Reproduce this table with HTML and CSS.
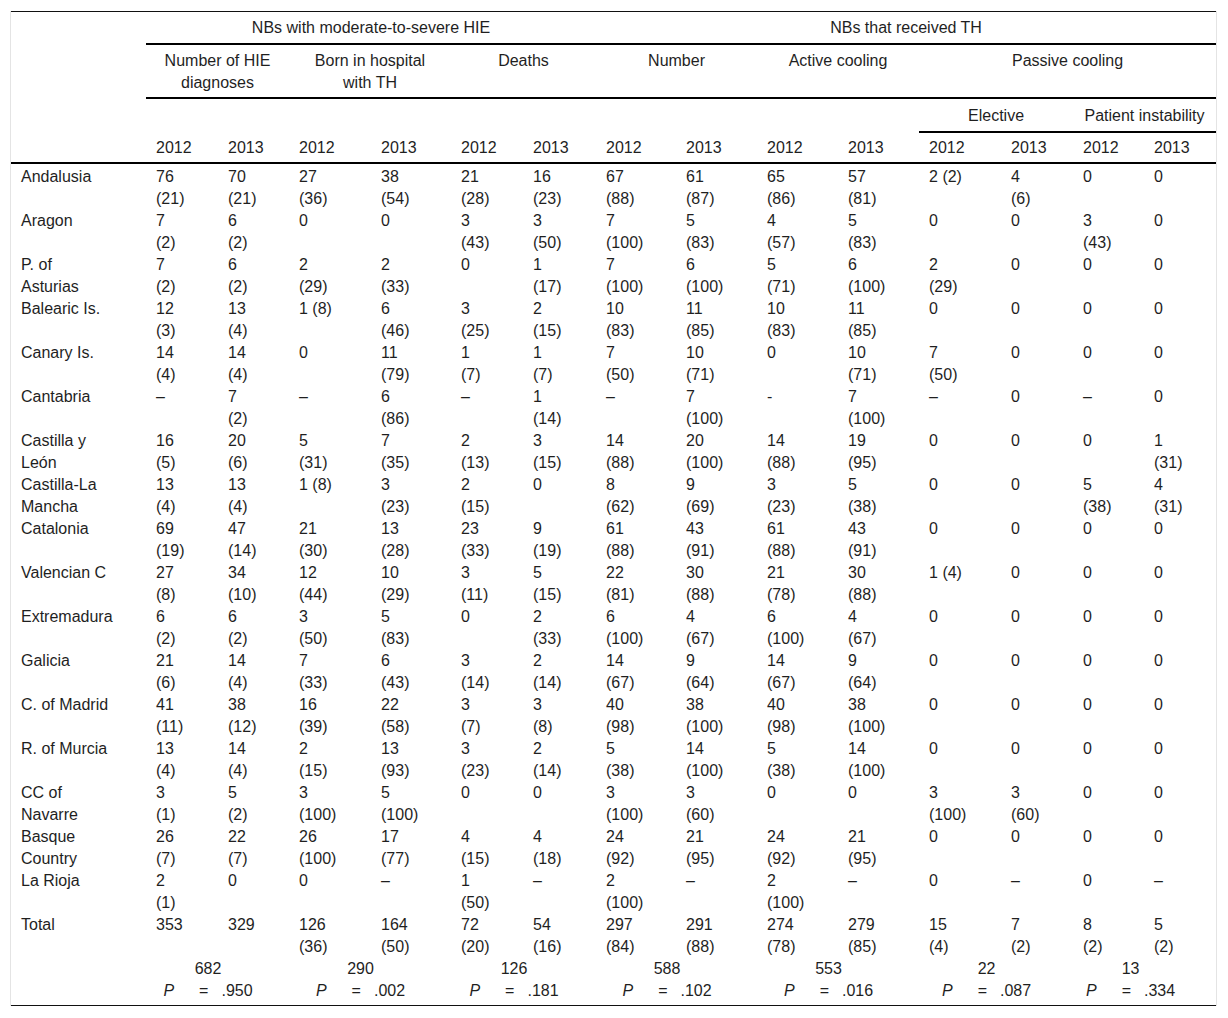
FILE: index.html
```html
<!DOCTYPE html>
<html lang="en">
<head>
<meta charset="utf-8">
<title>HIE and therapeutic hypothermia by region</title>
<link rel="stylesheet" href="styles.css">
</head>
<body>
<div class="wrap">
<table class="data">
<colgroup>
<col class="c-stub"><col class="w72"><col class="w71"><col class="w82"><col class="w80"><col class="w72"><col class="w73"><col class="w80"><col class="w81"><col class="w81"><col class="w81"><col class="w82"><col class="w72"><col class="w71"><col class="w72">
</colgroup>
<thead>
<tr class="r1">
<th class="stub-head" rowspan="4"></th>
<th colspan="6">NBs with moderate-to-severe HIE</th>
<th colspan="8">NBs that received TH</th>
</tr>
<tr class="r2">
<th colspan="2">Number of HIE<br>diagnoses</th>
<th colspan="2">Born in hospital<br>with TH</th>
<th colspan="2">Deaths</th>
<th colspan="2">Number</th>
<th colspan="2">Active cooling</th>
<th colspan="4">Passive cooling</th>
</tr>
<tr class="r3">
<th colspan="10" class="blank"></th>
<th colspan="2" class="sub">Elective</th>
<th colspan="2" class="sub">Patient instability</th>
</tr>
<tr class="r4">
<th>2012</th><th>2013</th><th>2012</th><th>2013</th><th>2012</th><th>2013</th><th>2012</th><th>2013</th><th>2012</th><th>2013</th><th>2012</th><th>2013</th><th>2012</th><th>2013</th>
</tr>
</thead>
<tbody>
<tr class="first"><td>Andalusia</td><td>76<br>(21)</td><td>70<br>(21)</td><td>27<br>(36)</td><td>38<br>(54)</td><td>21<br>(28)</td><td>16<br>(23)</td><td>67<br>(88)</td><td>61<br>(87)</td><td>65<br>(86)</td><td>57<br>(81)</td><td>2 (2)</td><td>4<br>(6)</td><td>0</td><td>0</td></tr>
<tr><td>Aragon</td><td>7<br>(2)</td><td>6<br>(2)</td><td>0</td><td>0</td><td>3<br>(43)</td><td>3<br>(50)</td><td>7<br>(100)</td><td>5<br>(83)</td><td>4<br>(57)</td><td>5<br>(83)</td><td>0</td><td>0</td><td>3<br>(43)</td><td>0</td></tr>
<tr><td>P. of<br>Asturias</td><td>7<br>(2)</td><td>6<br>(2)</td><td>2<br>(29)</td><td>2<br>(33)</td><td>0</td><td>1<br>(17)</td><td>7<br>(100)</td><td>6<br>(100)</td><td>5<br>(71)</td><td>6<br>(100)</td><td>2<br>(29)</td><td>0</td><td>0</td><td>0</td></tr>
<tr><td>Balearic Is.</td><td>12<br>(3)</td><td>13<br>(4)</td><td>1 (8)</td><td>6<br>(46)</td><td>3<br>(25)</td><td>2<br>(15)</td><td>10<br>(83)</td><td>11<br>(85)</td><td>10<br>(83)</td><td>11<br>(85)</td><td>0</td><td>0</td><td>0</td><td>0</td></tr>
<tr><td>Canary Is.</td><td>14<br>(4)</td><td>14<br>(4)</td><td>0</td><td>11<br>(79)</td><td>1<br>(7)</td><td>1<br>(7)</td><td>7<br>(50)</td><td>10<br>(71)</td><td>0</td><td>10<br>(71)</td><td>7<br>(50)</td><td>0</td><td>0</td><td>0</td></tr>
<tr><td>Cantabria</td><td>–</td><td>7<br>(2)</td><td>–</td><td>6<br>(86)</td><td>–</td><td>1<br>(14)</td><td>–</td><td>7<br>(100)</td><td>-</td><td>7<br>(100)</td><td>–</td><td>0</td><td>–</td><td>0</td></tr>
<tr><td>Castilla y<br>León</td><td>16<br>(5)</td><td>20<br>(6)</td><td>5<br>(31)</td><td>7<br>(35)</td><td>2<br>(13)</td><td>3<br>(15)</td><td>14<br>(88)</td><td>20<br>(100)</td><td>14<br>(88)</td><td>19<br>(95)</td><td>0</td><td>0</td><td>0</td><td>1<br>(31)</td></tr>
<tr><td>Castilla-La<br>Mancha</td><td>13<br>(4)</td><td>13<br>(4)</td><td>1 (8)</td><td>3<br>(23)</td><td>2<br>(15)</td><td>0</td><td>8<br>(62)</td><td>9<br>(69)</td><td>3<br>(23)</td><td>5<br>(38)</td><td>0</td><td>0</td><td>5<br>(38)</td><td>4<br>(31)</td></tr>
<tr><td>Catalonia</td><td>69<br>(19)</td><td>47<br>(14)</td><td>21<br>(30)</td><td>13<br>(28)</td><td>23<br>(33)</td><td>9<br>(19)</td><td>61<br>(88)</td><td>43<br>(91)</td><td>61<br>(88)</td><td>43<br>(91)</td><td>0</td><td>0</td><td>0</td><td>0</td></tr>
<tr><td>Valencian C</td><td>27<br>(8)</td><td>34<br>(10)</td><td>12<br>(44)</td><td>10<br>(29)</td><td>3<br>(11)</td><td>5<br>(15)</td><td>22<br>(81)</td><td>30<br>(88)</td><td>21<br>(78)</td><td>30<br>(88)</td><td>1 (4)</td><td>0</td><td>0</td><td>0</td></tr>
<tr><td>Extremadura</td><td>6<br>(2)</td><td>6<br>(2)</td><td>3<br>(50)</td><td>5<br>(83)</td><td>0</td><td>2<br>(33)</td><td>6<br>(100)</td><td>4<br>(67)</td><td>6<br>(100)</td><td>4<br>(67)</td><td>0</td><td>0</td><td>0</td><td>0</td></tr>
<tr><td>Galicia</td><td>21<br>(6)</td><td>14<br>(4)</td><td>7<br>(33)</td><td>6<br>(43)</td><td>3<br>(14)</td><td>2<br>(14)</td><td>14<br>(67)</td><td>9<br>(64)</td><td>14<br>(67)</td><td>9<br>(64)</td><td>0</td><td>0</td><td>0</td><td>0</td></tr>
<tr><td>C. of Madrid</td><td>41<br>(11)</td><td>38<br>(12)</td><td>16<br>(39)</td><td>22<br>(58)</td><td>3<br>(7)</td><td>3<br>(8)</td><td>40<br>(98)</td><td>38<br>(100)</td><td>40<br>(98)</td><td>38<br>(100)</td><td>0</td><td>0</td><td>0</td><td>0</td></tr>
<tr><td>R. of Murcia</td><td>13<br>(4)</td><td>14<br>(4)</td><td>2<br>(15)</td><td>13<br>(93)</td><td>3<br>(23)</td><td>2<br>(14)</td><td>5<br>(38)</td><td>14<br>(100)</td><td>5<br>(38)</td><td>14<br>(100)</td><td>0</td><td>0</td><td>0</td><td>0</td></tr>
<tr><td>CC of<br>Navarre</td><td>3<br>(1)</td><td>5<br>(2)</td><td>3<br>(100)</td><td>5<br>(100)</td><td>0</td><td>0</td><td>3<br>(100)</td><td>3<br>(60)</td><td>0</td><td>0</td><td>3<br>(100)</td><td>3<br>(60)</td><td>0</td><td>0</td></tr>
<tr><td>Basque<br>Country</td><td>26<br>(7)</td><td>22<br>(7)</td><td>26<br>(100)</td><td>17<br>(77)</td><td>4<br>(15)</td><td>4<br>(18)</td><td>24<br>(92)</td><td>21<br>(95)</td><td>24<br>(92)</td><td>21<br>(95)</td><td>0</td><td>0</td><td>0</td><td>0</td></tr>
<tr><td>La Rioja</td><td>2<br>(1)</td><td>0</td><td>0</td><td>–</td><td>1<br>(50)</td><td>–</td><td>2<br>(100)</td><td>–</td><td>2<br>(100)</td><td>–</td><td>0</td><td>–</td><td>0</td><td>–</td></tr>
<tr><td>Total</td><td>353</td><td>329</td><td>126<br>(36)</td><td>164<br>(50)</td><td>72<br>(20)</td><td>54<br>(16)</td><td>297<br>(84)</td><td>291<br>(88)</td><td>274<br>(78)</td><td>279<br>(85)</td><td>15<br>(4)</td><td>7<br>(2)</td><td>8<br>(2)</td><td>5<br>(2)</td></tr>
<tr class="pvals">
<td></td>
<td colspan="2">682<br><i>P</i><span class="eq">=</span>.950</td>
<td colspan="2">290<br><i>P</i><span class="eq">=</span>.002</td>
<td colspan="2">126<br><i>P</i><span class="eq">=</span>.181</td>
<td colspan="2">588<br><i>P</i><span class="eq">=</span>.102</td>
<td colspan="2">553<br><i>P</i><span class="eq">=</span>.016</td>
<td colspan="2">22<br><i>P</i><span class="eq">=</span>.087</td>
<td colspan="2" class="last">13<br><i>P</i><span class="eq">=</span>.334</td>
</tr>
</tbody>
</table>
</div>
</body>
</html>
```
FILE: styles.css
```css
html, body {
  margin: 0;
  padding: 0;
  background: #ffffff;
}

body {
  font-family: "Liberation Sans", Arial, Helvetica, sans-serif;
  font-size: 16px;
  color: #1f1f1f;
}

.wrap {
  margin: 11px 0 0 10px;
  width: 1205px;
  border-left: 1px solid #e4e4e4;
  border-right: 1px solid #e4e4e4;
}

.data {
  width: 1205px;
  table-layout: fixed;
  border-collapse: separate;
  border-spacing: 0;
  border-top: 1px solid #111;
  border-bottom: 1px solid #111;
}

.c-stub { width: 135px; }
.w71 { width: 71px; }
.w72 { width: 72px; }
.w73 { width: 73px; }
.w80 { width: 80px; }
.w81 { width: 81px; }
.w82 { width: 82px; }

.data th,
.data td {
  padding: 0 10px;
  line-height: 22px;
  white-space: nowrap;
  font-weight: normal;
  text-align: left;
  vertical-align: top;
}

.data thead th {
  text-align: center;
}

.data thead .stub-head {
  border-bottom: 2px solid #000;
}

.data .r1 th {
  padding-top: 5px;
  padding-bottom: 4px;
  border-bottom: 2px solid #000;
}

.data .r2 th {
  padding-top: 5px;
  padding-bottom: 3px;
  border-bottom: 2px solid #000;
}

.data .r3 th {
  padding-top: 6px;
  padding-bottom: 4px;
}

.data .r3 th.sub {
  border-bottom: 2px solid #000;
}

.data .r4 th {
  padding-top: 4px;
  padding-bottom: 3px;
  border-bottom: 2px solid #000;
  text-align: left;
}

.data .first td {
  padding-top: 2px;
}

.data .pvals td {
  text-align: center;
  padding: 0 29px 3px 10px;
}

.data .pvals td.last {
  padding-right: 38px;
}

.pvals i {
  font-style: italic;
}

.pvals .eq {
  display: inline-block;
  margin: 0 13px 0 25px;
}
```
